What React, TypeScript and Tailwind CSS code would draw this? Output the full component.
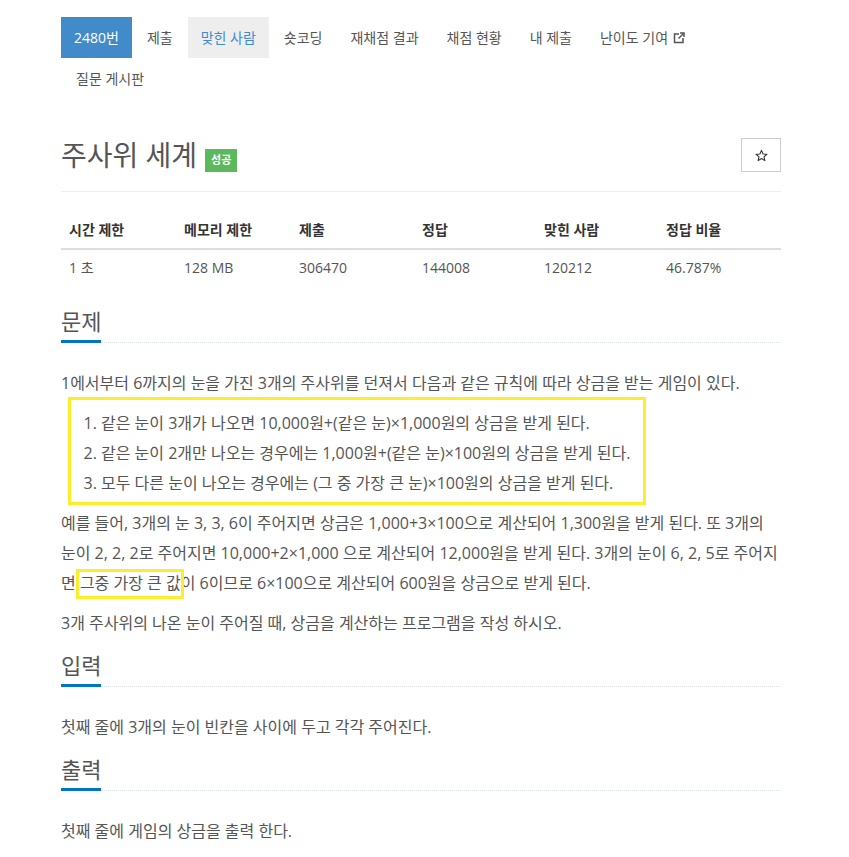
import React from "react";

const FONT = { fontFamily: '"Open Sans", "Noto Sans CJK KR", sans-serif' };

const tabs = [
  { label: "2480번", kind: "primary" },
  { label: "제출" },
  { label: "맞힌 사람", kind: "active" },
  { label: "숏코딩" },
  { label: "재채점 결과" },
  { label: "채점 현황" },
  { label: "내 제출" },
  { label: "난이도 기여", external: true },
  { label: "질문 게시판" },
];

const stats = [
  { head: "시간 제한", value: "1 초", w: "w-[115px]" },
  { head: "메모리 제한", value: "128 MB", w: "w-[115px]" },
  { head: "제출", value: "306470", w: "w-[123px]" },
  { head: "정답", value: "144008", w: "w-[122px]" },
  { head: "맞힌 사람", value: "120212", w: "w-[122px]" },
  { head: "정답 비율", value: "46.787%", w: "w-[123px]" },
];

function ExternalIcon() {
  return (
    <svg width="12" height="12" viewBox="0 0 12 12" className="ml-[5px]" fill="none">
      <path d="M6 2H1.5v8.5H10V6" stroke="#555" strokeWidth="1.5" />
      <path d="M7 1h4v4" stroke="#555" strokeWidth="1.5" />
      <path d="M11 1L5.5 6.5" stroke="#555" strokeWidth="1.5" />
    </svg>
  );
}

function Headline({ title, className = "" }: { title: string; className?: string }) {
  return (
    <div className={`flex border-b border-dotted border-[#dde2e8] mb-[25px] ${className}`}>
      <h2 className="text-[22px] leading-[24px] pb-[7px] border-b-[3px] border-[#0076c0] -mb-px text-[#555]">
        {title}
      </h2>
    </div>
  );
}

export default function App() {
  return (
    <div className="min-h-screen bg-white text-[#555]" style={FONT}>
      <div className="ml-[61px] w-[720px] pt-[17px]">
        {/* Problem menu */}
        <ul className="flex flex-wrap text-[14px]">
          {tabs.map((t, i) => (
            <li key={t.label} className={i === 0 ? "" : "ml-[2px]"}>
              <a
                className={`flex items-center h-[41px] px-[13px] ${
                  t.kind === "primary"
                    ? "bg-[#428bca] text-white"
                    : t.kind === "active"
                    ? "bg-[#eeeeee] text-[#428bca]"
                    : "text-[#555]"
                }`}
              >
                {t.label}
                {t.external && <ExternalIcon />}
              </a>
            </li>
          ))}
        </ul>

        {/* Title */}
        <div className="mt-[39px] pb-[19px] border-b border-[#eeeeee] flex items-center justify-between">
          <div className="flex items-end">
            <span className="text-[28px] leading-[34px] text-[#555]">주사위 세계</span>
            <span className="ml-[8px] h-[23px] px-[6px] flex items-center bg-[#5cb85c] text-white text-[11px] font-bold">
              성공
            </span>
          </div>
          <button className="w-[40px] h-[34px] border border-[#cccccc] flex items-center justify-center bg-white">
            <svg width="13" height="13" viewBox="0 0 24 24" fill="none">
              <path
                d="M12 2.5l2.9 6.6 7.1.6-5.4 4.7 1.6 7-6.2-3.7-6.2 3.7 1.6-7L2 9.7l7.1-.6z"
                stroke="#333"
                strokeWidth="2"
                strokeLinejoin="round"
              />
            </svg>
          </button>
        </div>

        {/* Stats table */}
        <table className="mt-[20px] w-full text-[14px] leading-[20px] border-collapse">
          <thead>
            <tr>
              {stats.map((s) => (
                <th key={s.head} className={`${s.w} text-left font-bold p-[8px] border-b-2 border-[#dddddd] text-[#333]`}>
                  {s.head}
                </th>
              ))}
            </tr>
          </thead>
          <tbody>
            <tr>
              {stats.map((s) => (
                <td key={s.head} className="p-[8px]">
                  {s.value}
                </td>
              ))}
            </tr>
          </tbody>
        </table>

        {/* 문제 */}
        <Headline title="문제" className="mt-[23px]" />
        <div className="text-[16px] leading-[30px]">
          <p className="mb-[10px]">
            1에서부터 6까지의 눈을 가진 3개의 주사위를 던져서 다음과 같은 규칙에 따라 상금을 받는 게임이 있다.
          </p>
          <div className="relative">
            <div className="absolute left-[7px] top-[-11px] w-[578px] h-[108px] border-[3px] border-[#fbee2a]" />
            <ol className="list-decimal pl-[40px] mb-[10px]">
              <li>같은 눈이 3개가 나오면 10,000원+(같은 눈)×1,000원의 상금을 받게 된다.</li>
              <li>같은 눈이 2개만 나오는 경우에는 1,000원+(같은 눈)×100원의 상금을 받게 된다.</li>
              <li>모두 다른 눈이 나오는 경우에는 (그 중 가장 큰 눈)×100원의 상금을 받게 된다.</li>
            </ol>
          </div>
          <p className="mb-[10px]">
            예를 들어, 3개의 눈 3, 3, 6이 주어지면 상금은 1,000+3×100으로 계산되어 1,300원을 받게 된다. 또 3개의
            눈이 2, 2, 2로 주어지면 10,000+2×1,000 으로 계산되어 12,000원을 받게 된다. 3개의 눈이 6, 2, 5로 주어지면{" "}
            <span className="relative">
              그중 가장 큰 값
              <span className="absolute left-[-4px] right-[-3px] top-[-3px] bottom-[-5px] border-[3px] border-[#fbee2a]" />
            </span>
            이 6이므로 6×100으로 계산되어 600원을 상금으로 받게 된다.
          </p>
          <p className="mb-[10px]">3개 주사위의 나온 눈이 주어질 때, 상금을 계산하는 프로그램을 작성 하시오.</p>
        </div>

        {/* 입력 */}
        <Headline title="입력" className="mt-[15px]" />
        <p className="text-[16px] leading-[30px] mb-[10px]">첫째 줄에 3개의 눈이 빈칸을 사이에 두고 각각 주어진다.</p>

        {/* 출력 */}
        <Headline title="출력" className="mt-[15px]" />
        <p className="text-[16px] leading-[30px] mb-[10px]">첫째 줄에 게임의 상금을 출력 한다.</p>
      </div>
    </div>
  );
}
